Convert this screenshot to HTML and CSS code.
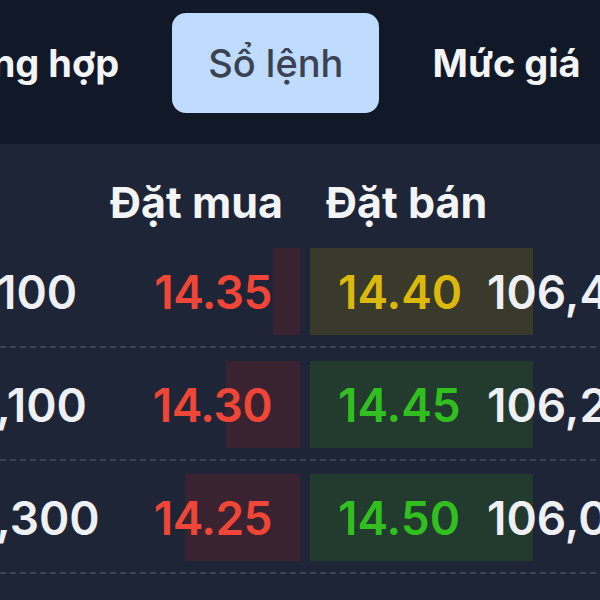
FILE: index.html
```html
<!DOCTYPE html>
<html lang="vi">
<head>
<meta charset="utf-8">
<link rel="stylesheet" href="styles.css">
</head>
<body>
<nav class="tabs">
  <div class="tab">Tổng hợp</div>
  <div class="tab tab-active">Sổ lệnh</div>
  <div class="tab">Mức giá</div>
</nav>
<section class="book">
  <div class="row head">
    <div class="cell vol"></div>
    <div class="cell buy"><span class="htext">Đặt mua</span></div>
    <div class="cell sell"><span class="htext">Đặt bán</span></div>
    <div class="cell svol"></div>
  </div>
  <div class="row">
    <div class="cell vol"><span class="num white">1,231,100</span></div>
    <div class="cell buy"><div class="bar bar-buy" style="width:27px"></div><span class="num red">14.35</span></div>
    <div class="cell sell"><div class="bar bar-ref"></div><span class="num yellow">14.40</span></div>
    <div class="cell svol"><span class="num white">106,400</span></div>
  </div>
  <div class="row">
    <div class="cell vol"><span class="num white">1,234,100</span></div>
    <div class="cell buy"><div class="bar bar-buy" style="width:74px"></div><span class="num red">14.30</span></div>
    <div class="cell sell"><div class="bar bar-sell"></div><span class="num green">14.45</span></div>
    <div class="cell svol"><span class="num white">106,200</span></div>
  </div>
  <div class="row">
    <div class="cell vol"><span class="num white">1,234,300</span></div>
    <div class="cell buy"><div class="bar bar-buy" style="width:115px"></div><span class="num red">14.25</span></div>
    <div class="cell sell"><div class="bar bar-sell"></div><span class="num green">14.50</span></div>
    <div class="cell svol"><span class="num white">106,000</span></div>
  </div>
  <div class="row">
    <div class="cell vol"></div>
    <div class="cell buy"></div>
    <div class="cell sell"></div>
    <div class="cell svol"></div>
  </div>
</section>
</body>
</html>
```

FILE: styles.css
```css
html, body {
  margin: 0;
  padding: 0;
}
body {
  width: 600px;
  height: 600px;
  overflow: hidden;
  background: #1e2536;
  font-family: Inter, "Noto Sans", sans-serif;
  color: #f3f4f6;
}
.tabs {
  height: 144px;
  box-sizing: border-box;
  padding-top: 13px;
  background: #111827;
  display: flex;
  align-items: flex-start;
  gap: 17px;
  margin-left: -90px;
  width: 800px;
}
.tab {
  flex: none;
  height: 100px;
  display: flex;
  align-items: center;
  padding: 0 36px;
  font-size: 38px;
  font-weight: 700;
  color: #f3f4f6;
  border-radius: 14px;
  box-sizing: border-box;
  white-space: nowrap;
}
.tab-active {
  background: #bfdbfe;
  color: #3b4252;
  font-weight: 500;
}
.book {
  margin-left: -160px;
  width: 900px;
}
.row {
  display: grid;
  grid-template-columns: 260px 190px 170px 270px;
  column-gap: 10px;
  padding: 13px 0 11px;
  border-bottom: 2px dashed transparent;
  background-image: repeating-linear-gradient(90deg, #3a4254 0 6px, transparent 6px 10px);
  background-size: 100% 2px;
  background-position: 0 100%;
  background-repeat: no-repeat;
  background-origin: border-box;
  height: 87px;
}
.head {
  height: 91px;
  padding: 0;
  background-image: none;
  border-bottom: 0;
}
.cell {
  display: grid;
  align-items: center;
  min-width: 0;
}
.cell > * {
  grid-area: 1 / 1;
}
.vol {
  justify-items: start;
  padding-left: 35px;
}
.buy {
  justify-items: end;
}
.sell {
  justify-items: start;
}
.svol {
  justify-items: start;
  margin-left: -3px;
}
.bar {
  height: 87px;
}
.bar-buy {
  background: #3a2331;
}
.bar-sell {
  background: #233a2f;
  width: 223px;
}
.bar-ref {
  background: #39392c;
  width: 223px;
}
.num {
  font-size: 46px;
  font-weight: 600;
  white-space: nowrap;
  line-height: 1;
}
.buy .num {
  padding-right: 28px;
  letter-spacing: -0.5px;
}
.sell .num {
  padding-left: 28px;
}
.htext {
  font-size: 43px;
  font-weight: 700;
  white-space: nowrap;
  color: #f3f4f6;
  padding-top: 24px;
}
.buy .htext {
  padding-right: 22px;
}
.sell .htext {
  padding-left: 16px;
}
.white { color: #eef0f4; }
.red { color: #ef4637; }
.yellow { color: #dcb80a; }
.green { color: #31bf1f; }
```
